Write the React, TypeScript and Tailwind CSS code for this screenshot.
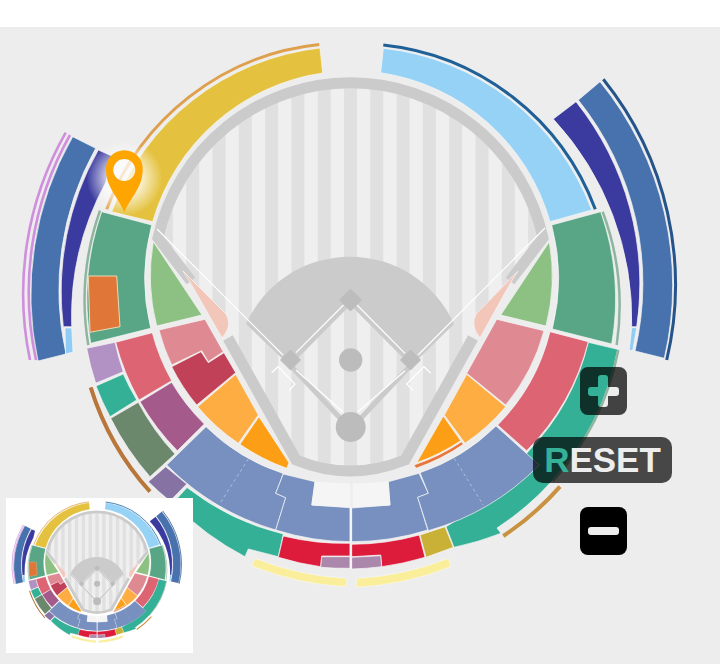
import React, { useId } from 'react';

const EDGE = '#f7f7f7';

// every seat block, in page pixels of the big map
const sections: { d: string; fill: string }[] = [
  // upper deck
  { fill: '#e4c23f', d: 'M320,48 A252,252 0 0 0 111.7,211.7 L152.7,221.7 A208,208 0 0 1 322.7,73 Z' },
  { fill: '#95d2f6', d: 'M383.3,48.3 A252,252 0 0 1 591.7,210 L550,221.7 A208,208 0 0 0 380.7,72.7 Z' },
  // bleachers left
  { fill: '#4772ad', d: 'M72.7,136.7 L95.7,148.3 A291,291 0 0 0 66,354 L38,361 A318,318 0 0 1 72.7,136.7 Z' },
  { fill: '#3a3a9f', d: 'M98.3,150 L112,156 L106,182 A280,280 0 0 0 71.7,326.7 L63.3,326.7 A288,288 0 0 1 98.3,150 Z' },
  { fill: '#8ecbf5', d: 'M65,328 L71.7,328 L73,352 L65.5,354 Z' },
  // bleachers right
  { fill: '#4772ad', d: 'M600,81.7 L578.3,100 A293,293 0 0 1 635,351 L664.3,358.3 A322,322 0 0 0 600,81.7 Z' },
  { fill: '#3a3a9f', d: 'M553.3,119 L576,101.7 A292,292 0 0 1 636.7,326.7 L631.7,326.7 A295,295 0 0 0 553.3,119 Z' },
  { fill: '#8ecbf5', d: 'M631.7,327.7 L636.7,327.7 L632.7,350.7 L629.3,350 Z' },
  // outfield
  { fill: '#58a686', d: 'M101.7,211.7 L151.7,225 A208,208 0 0 0 150.7,328.3 L90.7,343.3 A265,265 0 0 1 101.7,211.7 Z' },
  { fill: '#58a686', d: 'M551.7,225 L600.7,211.7 A265,265 0 0 1 611.7,344 L552.3,329 A208,208 0 0 0 551.7,225 Z' },
  { fill: '#8dc183', d: 'M153.3,241.7 L202,315 L156.7,326 A200,200 0 0 1 153.3,241.7 Z' },
  { fill: '#8dc183', d: 'M549.3,241.7 L500.7,315 L546,326 A200,200 0 0 0 549.3,241.7 Z' },
  // left field corner
  { fill: '#b291c4', d: 'M86.7,348.3 L115,342.3 A238,238 0 0 0 123.3,371.7 L95.7,383.3 A265,265 0 0 1 86.7,348.3 Z' },
  { fill: '#33b096', d: 'M96,386 L123.3,374 A238,238 0 0 0 136.7,400 L110,416.7 A265,265 0 0 1 96,386 Z' },
  { fill: '#6b886d', d: 'M110.7,418.3 L138.3,402.3 A238,238 0 0 0 175,454 L150,476.7 A271,271 0 0 1 110.7,418.3 Z' },
  { fill: '#dc6473', d: 'M115.7,342.3 L152.3,332.7 A200,200 0 0 0 171.7,380.7 L139,400 A238,238 0 0 1 115.7,342.3 Z' },
  { fill: '#a55a8c', d: 'M140,401.7 L171.7,382.3 A200,200 0 0 0 204.3,424 L177.3,450.7 A238,238 0 0 1 140,401.7 Z' },
  { fill: '#df8a92', d: 'M159,330 L205,319.3 L223.3,351.7 L208.3,361.7 L201.7,350.7 L171.7,365 A195,195 0 0 1 159,330 Z' },
  { fill: '#c04158', d: 'M171.7,366.7 L201,351.7 L208.3,362.7 L224,352.7 L235.7,372.7 L196.7,405 A195,195 0 0 1 171.7,366.7 Z' },
  { fill: '#fdad42', d: 'M197.7,406.7 L235.7,374.3 L258.3,415 L238.3,443.3 A195,195 0 0 1 197.7,406.7 Z' },
  { fill: '#fd9e17', d: 'M240,444.3 L259,416.7 L289,462.7 L286.7,468.3 A195,195 0 0 1 240,444.3 Z' },
  // right field corner
  { fill: '#33b096', d: 'M588.3,342.3 L617.7,349.3 A271,271 0 0 1 553,480 A280,280 0 0 1 497,528 L501,533.3 A285,285 0 0 1 454,547.3 L446,526.7 A252,252 0 0 0 528,451.7 A236,236 0 0 0 588.3,342.3 Z' },
  { fill: '#dc6473', d: 'M550,331.7 L588.3,341.7 A236,236 0 0 1 526.7,450.7 L497.7,425 A200,200 0 0 0 550,331.7 Z' },
  { fill: '#df8a92', d: 'M496.7,319.3 L544,330.7 A195,195 0 0 1 505.7,405 L466.7,373.3 Z' },
  { fill: '#fdad42', d: 'M466.7,374.3 L505.7,406.7 A195,195 0 0 1 465,443.3 L444.3,415 Z' },
  { fill: '#fd9e17', d: 'M443.3,416 L460.7,440.7 A195,195 0 0 1 416.7,462.7 Z' },
  { fill: '#e8763a', d: 'M461.7,441.7 L463.3,444.3 A197,197 0 0 1 416,468.3 L414,465 A197,197 0 0 0 461.7,441.7 Z' },
  // behind home
  { fill: '#7890bf', d: 'M166.7,465 L206,426.7 A197,197 0 0 0 283.3,473.5 L275.7,493.3 L285.7,497.7 L275.7,530 A252,252 0 0 1 166.7,465 Z' },
  { fill: '#7890bf', d: 'M283.3,474 L315,481.7 L311.7,505 L350,507.7 L350,541.7 A252,252 0 0 1 275.7,530 L285.7,497.7 L275.7,493.3 Z' },
  { fill: '#7890bf', d: 'M351.7,508 L390,505 L388.3,481.7 L419,473.3 L428.3,493.3 L417.7,497.3 L427.7,530 A252,252 0 0 1 351.7,541.7 Z' },
  { fill: '#7890bf', d: 'M420,472.7 A197,197 0 0 0 496,426 L539.3,465 A252,252 0 0 1 428.3,530.7 L417.7,497.3 L428.3,493.3 Z' },
  { fill: '#f5f5f5', d: 'M315,482 L350,484 L350,507 L312,505 Z' },
  { fill: '#f5f5f5', d: 'M353,484 L388,482 L390,505 L353,507 Z' },
  { fill: '#8672a3', d: 'M148.3,481.7 L165.7,466.7 L186.7,484 L170,501 A278,278 0 0 1 148.3,481.7 Z' },
  { fill: '#33b096', d: 'M173,503 L187,487.5 A253,253 0 0 0 283.3,534 L278.3,556.7 L248.3,549 L245,556.7 A280,280 0 0 1 173,503 Z' },
  { fill: '#dc1c3a', d: 'M283.3,536 A253,253 0 0 0 350,543.3 L350,556 L321.7,556 L320.7,566.7 A278,278 0 0 1 278.3,557.3 Z' },
  { fill: '#dc1c3a', d: 'M351.7,544.3 A253,253 0 0 0 419.3,535 L425,557.3 A278,278 0 0 1 381.7,566.7 L380.7,555 L351.7,556.7 Z' },
  { fill: '#ab87ab', d: 'M321.7,556.7 L350,556.7 L350,568.3 A278,278 0 0 1 320.7,567.3 Z' },
  { fill: '#ab87ab', d: 'M351.7,557.3 L380.7,555.7 L381.7,566.7 A278,278 0 0 1 351.7,569 Z' },
  { fill: '#c9b138', d: 'M420,535 L445,526.7 L453.3,547.3 L426,557.3 Z' },
  { fill: '#fbee9a', d: 'M255,558.3 A288,288 0 0 0 346.7,578.3 L346,586.7 A297,297 0 0 1 251.7,566 Z' },
  { fill: '#fbee9a', d: 'M356.7,578.3 A288,288 0 0 0 448.3,558.3 L451,566.7 A297,297 0 0 1 356,587.3 Z' },
  // bullpens
  { fill: '#f3c6ba', d: 'M183,271 L226,314 Q233,326 222,338 L190,282 Z' },
  { fill: '#f3c6ba', d: 'M518,271 L476,314 Q470,326 480,338 L511,282 Z' },
];

// thin rims on the outside of the blocks
const rims: { d: string; stroke: string; width: number }[] = [
  { stroke: '#dfa04e', width: 3, d: 'M319.3,44.5 A255,255 0 0 0 106.7,209.3' },
  { stroke: '#1e6097', width: 3, d: 'M383.3,45 A255,255 0 0 1 595.3,209.3' },
  { stroke: '#26548a', width: 3, d: 'M603.3,79.3 A328,328 0 0 1 666.7,360' },
  { stroke: '#cf8fdc', width: 2.6, d: 'M65.7,132.7 A325,325 0 0 0 30,360' },
  { stroke: '#cf8fdc', width: 2.6, d: 'M70,135 A320,320 0 0 0 36,360' },
  { stroke: '#8fb59f', width: 2.5, d: 'M100,210.7 A270,270 0 0 0 88.3,345' },
  { stroke: '#8fb59f', width: 2.5, d: 'M602.7,211.7 A270,270 0 0 1 616.7,345' },
  { stroke: '#8fb59f', width: 2.5, d: 'M618.3,350 A272,272 0 0 1 553,481' },
  { stroke: '#b9763a', width: 4, d: 'M90.7,387.3 A280,280 0 0 0 150,491.7' },
  { stroke: '#c99240', width: 4, d: 'M560,486.7 A288,288 0 0 1 503.3,536' },
];

const stripeXs = [-8, -7, -6, -5, -4, -3, -2, -1, 0, 1, 2, 3, 4, 5, 6, 7, 8].map((n) => 344 + n * 26.3);

const bases = [
  { x: 350.5, y: 300, r: 11 },
  { x: 290.5, y: 360, r: 10 },
  { x: 410.5, y: 360, r: 10 },
];

const Stadium = ({ viewBox, className, pin }: { viewBox: string; className: string; pin?: boolean }) => {
  const id = useId();
  return (
    <svg viewBox={viewBox} className={className}>
      <defs>
        <clipPath id={`${id}field`}>
          <path d="M158,238 A197,197 0 0 1 543,238 L473,338 L405,460 Q350,482 296,460 L228,338 Z" />
        </clipPath>
        <radialGradient id={`${id}glow`}>
          <stop offset="45%" stopColor="#ffffff" stopOpacity="0.75" />
          <stop offset="100%" stopColor="#ffffff" stopOpacity="0" />
        </radialGradient>
      </defs>

      {/* field */}
      <g clipPath={`url(#${id}field)`}>
        <rect x="100" y="70" width="500" height="420" fill="#efefef" />
        {stripeXs.map((x) => (
          <rect key={x} x={x} y="70" width="13" height="420" fill="#e0e0e0" />
        ))}
      </g>
      <path d="M246,324 A114,114 0 0 1 454,324 L411,366 L350.5,305 L290,366 Z" fill="#cbcbcb" />
      <path d="M290,365 L340,418 M411,365 L361,418" stroke="#cbcbcb" strokeWidth="5" fill="none" />
      <path d="M191,281 L158,238 A197,197 0 0 1 543,238 L510,281" stroke="#cbcbcb" strokeWidth="11" fill="none" />
      <path d="M228,338 L296,460 Q350,482 405,460 L473,338" stroke="#cbcbcb" strokeWidth="11" fill="none" />

      {/* lines */}
      <g stroke="#ffffff" fill="none" strokeWidth="1.2">
        <path d="M157,229 L283,355 M545,228 L418,355" />
        <path d="M343.5,305 L296,352.7 M357,305 L405,353.3" />
        <path d="M296,370 L343,412 M405,370.7 L358,411.7" />
        <path d="M271.7,372.7 L278,366.7 L295,384 L289.3,390.7" />
        <path d="M430.7,373.3 L424,366.7 L406.7,384 L413.3,390.7" />
      </g>
      {bases.map((b) => (
        <path
          key={b.x}
          d={`M${b.x},${b.y - b.r} L${b.x + b.r},${b.y} L${b.x},${b.y + b.r} L${b.x - b.r},${b.y} Z`}
          fill="#bdbdbd"
          stroke="#bdbdbd"
          strokeLinejoin="round"
        />
      ))}
      <circle cx="350.7" cy="360" r="11.7" fill="#bcbcbc" />
      <circle cx="350.7" cy="427" r="15" fill="#bcbcbc" />

      {/* seats */}
      {sections.map((s, i) => (
        <path key={i} d={s.d} fill={s.fill} stroke={EDGE} strokeWidth="0.7" />
      ))}
      {rims.map((r) => (
        <path key={r.d} d={r.d} stroke={r.stroke} strokeWidth={r.width} fill="none" />
      ))}
      <path
        d="M248.3,459 L220,503.3 M454.3,458.3 L483.3,505"
        stroke="#ffffff"
        strokeOpacity="0.4"
        strokeDasharray="3 3"
        fill="none"
      />
      <path d="M88.3,276 L116.7,276 L120,326.7 L90,332.3 Z" fill="#e07637" stroke="#eadbb8" />
      <path d="M350.8,507 L350.8,569" stroke="#f7f7f7" strokeWidth="1.8" />

      {pin && (
        <g>
          <circle cx="124.3" cy="178" r="38" fill={`url(#${id}glow)`} />
          <path
            fillRule="evenodd"
            fill="#ffa500"
            d="M124.3,212 C118,197 106,187 106,170 A18.4,18.4 0 1 1 142.7,170 C142.7,187 131,197 124.3,212 Z M124.3,159 A11,11 0 1 0 124.3,181 A11,11 0 1 0 124.3,159 Z"
          />
        </g>
      )}
    </svg>
  );
};

const App: React.FC = () => {
  return (
    <div className="w-[720px] h-[664px] flex flex-col bg-white overflow-hidden font-['Liberation_Sans',sans-serif]">
      <div className="h-[27px] shrink-0 bg-white" />
      <div className="relative flex-1 bg-[#ededed]">
        <Stadium viewBox="0 27 720 637" className="block w-[720px] h-[637px]" pin />

        {/* zoom controls */}
        <div className="absolute left-[533px] top-[340px] w-[139px] flex flex-col items-center">
          <button className="block w-[47px] h-[48px] ml-[2px]">
            <svg viewBox="0 0 47 48" className="block w-[47px] h-[48px]">
              <path
                fillRule="evenodd"
                fill="#000000"
                fillOpacity="0.72"
                d="M8,0 H39 A8,8 0 0 1 47,8 V40 A8,8 0 0 1 39,48 H8 A8,8 0 0 1 0,40 V8 A8,8 0 0 1 8,0 Z M18,11 Q18,8 21,8 H25 Q28,8 28,11 V20 H36 Q39,20 39,23 V26 Q39,29 36,29 H28 V37 Q28,40 25,40 H21 Q18,40 18,37 V29 H11 Q8,29 8,26 V23 Q8,20 11,20 H18 Z"
              />
            </svg>
          </button>
          <button className="mt-[22px] w-[139px] h-[46px] rounded-[10px] bg-black/70 text-[35px] leading-[46px] font-bold text-[#ededed] text-center">
            <span className="text-[#36b096]">R</span>ESET
          </button>
          <button className="mt-[24px] ml-[2px] w-[47px] h-[48px] rounded-lg bg-black flex items-center justify-center">
            <div className="w-[31px] h-[8px] rounded-[3px] bg-[#ededed]" />
          </button>
        </div>

        {/* overview */}
        <div className="absolute left-[6px] bottom-[11px] w-[187px] h-[155px] bg-white overflow-hidden">
          <Stadium viewBox="0 30 720 596" className="block w-[187px] h-[155px]" />
        </div>
      </div>
    </div>
  );
};

export default App;
